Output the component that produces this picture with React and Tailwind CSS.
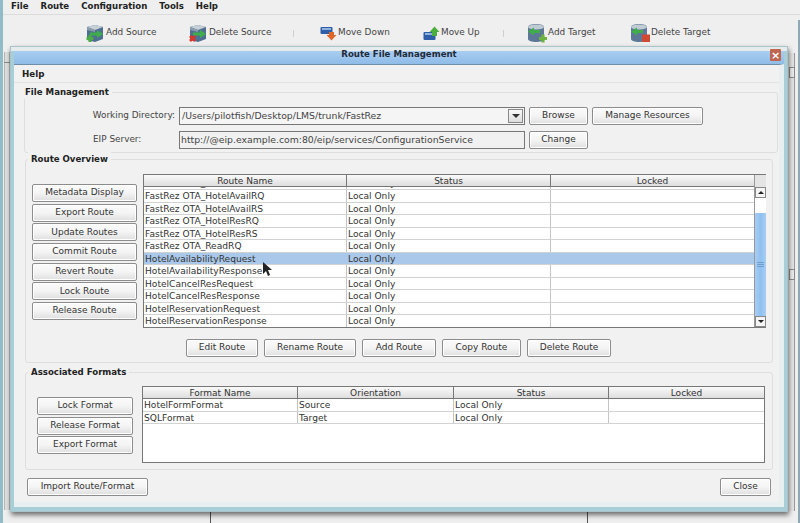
import React from "react";

const F = { fontFamily: '"DejaVu Sans", sans-serif' };

function Btn({ children, w }) {
  return (
    <div className={`${w} flex h-[18px] shrink-0 items-center justify-center rounded-[2px] border border-[#8d8d8d] bg-gradient-to-b from-[#fbfbfb] via-[#f4f4f4] to-[#dfdfdf] text-[9px] text-[#333] shadow-[inset_0_0_0_1px_#fff]`}>
      {children}
    </div>
  );
}

function Group({ title, className, legend = "left-[2px]", children }) {
  return (
    <div className={`relative rounded-[3px] border border-[#dedede] ${className}`}>
      <div className={`absolute ${legend} top-[-8px] bg-[#f1f1f1] px-[3px] text-[8.6px] leading-[14px] font-bold text-[#222]`}>{title}</div>
      {children}
    </div>
  );
}

function Header({ cols }) {
  return (
    <div className="flex h-[12px] shrink-0 border-b border-[#777] bg-gradient-to-b from-[#fafafa] to-[#dedede]">
      {cols.map((c) => (
        <div key={c.n} className={`${c.w} shrink-0 border-r border-[#777] text-center text-[9px] leading-[12px] text-[#333] last:border-r-0`}>{c.n}</div>
      ))}
    </div>
  );
}

function Row({ cols, cells, sel }) {
  return (
    <div className={`flex h-[12.5px] shrink-0 border-b border-[#d2d2d2] ${sel ? "bg-[#a9c8ea]" : "bg-white"}`}>
      {cols.map((c, i) => (
        <div key={c.n} className={`${c.w} shrink-0 overflow-hidden border-r ${sel ? "border-[#a9c8ea]" : "border-[#c4c4c4]"} pl-[1px] text-[9.1px] leading-[12px] text-[#333] last:border-r-0`}>{cells[i]}</div>
      ))}
    </div>
  );
}

function ClippedRow({ cols, cells }) {
  return (
    <div className="flex h-[3px] shrink-0 border-b border-[#d2d2d2] bg-white">
      {cols.map((c, i) => (
        <div key={c.n} className={`${c.w} flex shrink-0 items-end overflow-hidden border-r border-[#c4c4c4] pl-[1px] text-[9.1px] leading-[12px] text-[#333] last:border-r-0`}>
          <span className="shrink-0">{cells[i]}</span>
        </div>
      ))}
    </div>
  );
}

function SourceIcon({ del }) {
  return (
    <svg width="20" height="20" viewBox="0 0 20 20" className="shrink-0">
      <path d="M2 4l8-2 8 2v12l-8 3-8-2z" fill="#4f6f92" />
      <path d="M2 4l8-2 8 2-8 3z" fill="#c6d0d6" />
      <path d="M2 4l8 3v2L2 7z" fill="#8b9cab" />
      <path d="M5 9.500h7V7l6 4-6 4v-2.500H5z" fill="#3fae4a" />
      {del ? (
        <path d="M2 13l5 5M7 13l-5 5" stroke="#d8352a" strokeWidth="2.800" />
      ) : (
        <path d="M1.500 15.500h7M5 12v7" stroke="#4dab45" strokeWidth="3" />
      )}
    </svg>
  );
}

function TargetIcon({ del }) {
  return (
    <svg width="21" height="20" viewBox="0 0 21 20" className="shrink-0">
      <path d="M1 4c0-4 16-4 16 0v12c0 4-16 4-16 0z" fill="#5d7896" />
      <ellipse cx="9" cy="4" rx="8" ry="2.600" fill="#c0ccd4" />
      <path d="M13 7H7V4.500L1 8.500l6 4V10h6z" fill="#3fae4a" />
      {del ? (
        <rect x="12" y="11.500" width="8" height="7.500" fill="#cf4a33" />
      ) : (
        <path d="M12 15.500h8M16 11.500v8" stroke="#6cb33f" strokeWidth="3.200" />
      )}
    </svg>
  );
}

function MoveDown() {
  return (
    <svg width="17" height="15" viewBox="0 0 17 15" className="shrink-0">
      <rect x="0.500" y="1" width="12" height="7" rx="1" fill="#2e5fa8" />
      <rect x="2" y="2" width="9" height="2" fill="#8fb2dd" />
      <path d="M9 6h5v3h2.500l-5 5.500-5-5.500H9z" fill="#e0672a" />
    </svg>
  );
}

function MoveUp() {
  return (
    <svg width="17" height="15" viewBox="0 0 17 15" className="shrink-0">
      <rect x="0.500" y="6" width="12" height="8" rx="1" fill="#2e5fa8" />
      <rect x="2" y="7" width="8" height="2" fill="#8fb2dd" />
      <path d="M9 10V6H6.500l5-5.500 5 5.500H14v4z" fill="#4cae3c" />
    </svg>
  );
}

function Tool({ icon, label, w, gap = "gap-[2px]" }) {
  return (
    <div className={`${w} flex shrink-0 items-center ${gap} text-[8.9px] text-[#444]`}>
      {icon}
      <span>{label}</span>
    </div>
  );
}

const routeCols = [
  { n: "Route Name", w: "w-[203px]" },
  { n: "Status", w: "w-[204px]" },
  { n: "Locked", w: "w-[203px]" },
];
const fmtCols = [
  { n: "Format Name", w: "w-[155px]" },
  { n: "Orientation", w: "w-[156px]" },
  { n: "Status", w: "w-[155px]" },
  { n: "Locked", w: "w-[155px]" },
];
const routes = [
  "FastRez OTA_HotelAvailRQ",
  "FastRez OTA_HotelAvailRS",
  "FastRez OTA_HotelResRQ",
  "FastRez OTA_HotelResRS",
  "FastRez OTA_ReadRQ",
  "HotelAvailabilityRequest",
  "HotelAvailabilityResponse",
  "HotelCancelResRequest",
  "HotelCancelResResponse",
  "HotelReservationRequest",
  "HotelReservationResponse",
];

export default function App() {
  return (
    <div style={F} className="relative h-[523px] w-[800px] overflow-hidden bg-[#efefef]">
      {/* application behind the dialog */}
      <div className="ml-[3px] flex h-[13px] gap-[12px] pl-[8px] text-[8.6px] leading-[13px] font-bold text-[#222]">
        <span>File</span><span>Route</span><span>Configuration</span><span>Tools</span><span>Help</span>
      </div>
      <div className="mt-[1px] h-px bg-[#dcdcdc]" />
      <div className="flex h-[32px] items-center pl-[85px] pt-[4px]">
        <Tool w="w-[103px]" gap="gap-[1px]" icon={<SourceIcon />} label="Add Source" />
        <Tool w="w-[132px]" gap="gap-[1px]" icon={<SourceIcon del />} label="Delete Source" />
        <Tool w="w-[103px]" gap="gap-[1px]" icon={<MoveDown />} label="Move Down" />
        <Tool w="w-[104px]" gap="gap-[1px]" icon={<MoveUp />} label="Move Up" />
        <Tool w="w-[103px]" gap="gap-[0px]" icon={<TargetIcon />} label="Add Target" />
        <Tool w="w-[100px]" gap="gap-[0px]" icon={<TargetIcon del />} label="Delete Target" />
      </div>
      <div className="absolute left-0 top-0 h-full w-[3px] bg-[#8fbcc8]" />
      <div className="absolute left-[293px] top-[30px] h-[7px] w-px bg-[#cfcfcf]" />
      <div className="absolute left-[503px] top-[30px] h-[7px] w-px bg-[#cfcfcf]" />
      <div className="absolute left-[4px] top-[52px] h-[458px] w-[6px] border-x border-[#b5b5b5] bg-[#dfdfdf]" />
      <div className="absolute left-[4px] top-[62px] h-px w-[6px] bg-[#888]" />
      <div className="absolute left-[788px] top-[53px] h-[458px] w-[7px] border-r border-[#9a9a9a] bg-[#e6e6e6]" />
      <div className="absolute left-[789px] top-[67px] h-[11px] w-[6px] border border-[#8a8a8a] bg-[#eee]" />
      <div className="absolute left-[789px] top-[269px] h-[11px] w-[6px] border border-[#8a8a8a] bg-[#eee]" />
      <div className="absolute right-0 top-[20px] h-full w-[2px] bg-[#8ea8b4]" />
      <div className="absolute left-[210px] top-[510px] h-[13px] w-px bg-[#555]" />
      <div className="absolute left-[587px] top-[510px] h-[13px] w-px bg-[#555]" />

      {/* dialog window */}
      <div className="absolute left-[10px] top-[46px] flex h-[466px] w-[778px] flex-col border border-[#a9c3cb] bg-[#a8cfd8] pb-[4px] pl-[3px] pr-[3px] shadow-[1px_3px_5px_rgba(0,0,0,0.55)]">
        <div className="-mx-[3px] h-[4px] shrink-0 bg-[#e6ecee]" />
        <div className="relative flex h-[13px] shrink-0 items-start justify-center bg-gradient-to-b from-[#a9cdf0] to-[#8fbce8] text-[8.6px] leading-[7px] font-bold text-[#1f2a3a]">
          Route File Management
          <div className="absolute right-[3px] top-[-2px] flex h-[12px] w-[11px] items-center justify-center rounded-[1px] bg-[#bf6650] text-[11px] leading-none font-bold text-white">×</div>
        </div>
        <div className="flex min-h-0 flex-1 flex-col border-b-[5px] border-r-[5px] border-t border-b-[#e8eff1] border-r-[#e8eff1] border-t-[#6f8fa8] bg-[#f1f1f1] pl-[10px]">
          <div className="-ml-[10px] h-[18px] shrink-0 border-b border-[#e2e2e2] pl-[8px] text-[8.7px] leading-[18px] font-bold text-[#222]">Help</div>

          <Group title="File Management" legend="-left-[3px]" className="mt-[9px] h-[61px] w-[754px] shrink-0">
            <div className="flex items-center pt-[14px]">
              <div className="w-[154px] shrink-0 pr-[4px] text-right text-[8.9px] text-[#444]">Working Directory:</div>
              <div className="flex h-[18px] w-[346px] shrink-0 items-center justify-between border border-[#777] bg-[#f5f5f5] pl-[2px] pr-[1px] text-[9.3px] text-[#444]">
                <span>/Users/pilotfish/Desktop/LMS/trunk/FastRez</span>
                <div className="flex h-[14px] w-[15px] items-center justify-center border border-[#888] bg-gradient-to-b from-[#fafafa] to-[#ddd]">
                  <div className="h-0 w-0 border-x-[4px] border-t-[4px] border-x-transparent border-t-[#333]" />
                </div>
              </div>
              <div className="ml-[4px] flex gap-[4px]">
                <Btn w="w-[59px]">Browse</Btn>
                <Btn w="w-[111px]">Manage Resources</Btn>
              </div>
            </div>
            <div className="mt-[6px] flex items-center">
              <div className="w-[154px] shrink-0 pl-[68px] text-[8.9px] text-[#444]">EIP Server:</div>
              <div className="flex h-[18px] w-[346px] shrink-0 items-center border border-[#777] bg-[#f1f1f1] pl-[1px] text-[9.3px] text-[#444]">http://@eip.example.com:80/eip/services/ConfigurationService</div>
              <div className="ml-[4px]"><Btn w="w-[59px]">Change</Btn></div>
            </div>
          </Group>

          <Group title="Route Overview" className="ml-[1px] mt-[6px] h-[204px] w-[748px] shrink-0">
            <div className="flex pt-[14px]">
              <div className="ml-[6px] mt-[10px] flex w-[105px] shrink-0 flex-col gap-[1.67px]">
                {["Metadata Display", "Export Route", "Update Routes", "Commit Route", "Revert Route", "Lock Route", "Release Route"].map((b) => (
                  <Btn key={b} w="w-[105px]">{b}</Btn>
                ))}
              </div>
              <div className="ml-[6px] flex h-[154px] w-[623px] shrink-0 border border-[#777] bg-white">
                <div className="flex w-[610px] shrink-0 flex-col overflow-hidden">
                  <Header cols={routeCols} />
                  <ClippedRow cols={routeCols} cells={["FastRez OTA_GetRoomRS", "Local Only", ""]} />
                  {routes.map((r, i) => (
                    <Row key={r} cols={routeCols} cells={[r, "Local Only", ""]} sel={i === 5} />
                  ))}
                </div>
                <div className="flex w-[12px] shrink-0 flex-col border-l border-[#999]">
                  <div className="h-[12px] shrink-0 bg-[#e4e4e4]" />
                  <div className="flex h-[11px] shrink-0 items-center justify-center border border-[#888] bg-[#f4f4f4]">
                    <div className="h-0 w-0 border-x-[3px] border-b-[3px] border-x-transparent border-b-[#222]" />
                  </div>
                  <div className="h-[15px] shrink-0 bg-white" />
                  <div className="flex flex-1 flex-col items-center justify-center gap-[1px] bg-gradient-to-r from-[#a8cdf2] via-[#8fc0f2] to-[#a8cdf2]">
                    <div className="h-px w-[7px] bg-[#6f9fd0]" />
                    <div className="h-px w-[7px] bg-[#6f9fd0]" />
                    <div className="h-px w-[7px] bg-[#6f9fd0]" />
                  </div>
                  <div className="flex h-[11px] shrink-0 items-center justify-center border border-[#888] bg-[#f4f4f4]">
                    <div className="h-0 w-0 border-x-[3px] border-t-[3px] border-x-transparent border-t-[#222]" />
                  </div>
                </div>
              </div>
            </div>
            <div className="ml-[160px] mt-[11px] flex gap-[6px]">
              <Btn w="w-[72px]">Edit Route</Btn>
              <Btn w="w-[92px]">Rename Route</Btn>
              <Btn w="w-[74px]">Add Route</Btn>
              <Btn w="w-[79px]">Copy Route</Btn>
              <Btn w="w-[84px]">Delete Route</Btn>
            </div>
            <svg width="11" height="15" viewBox="0 0 11 15" className="absolute left-[236px] top-[102px]">
              <path d="M1 0v12l3-3 2 5 2-1-2-5h4z" fill="#222" />
            </svg>
          </Group>

          <Group title="Associated Formats" className="ml-[1px] mt-[9px] h-[98px] w-[748px] shrink-0">
            <div className="flex pt-[13px]">
              <div className="ml-[11px] mt-[11px] flex w-[96px] shrink-0 flex-col gap-[1.5px]">
                {["Lock Format", "Release Format", "Export Format"].map((b) => (
                  <Btn key={b} w="w-[96px]">{b}</Btn>
                ))}
              </div>
              <div className="ml-[9px] flex h-[77px] w-[623px] shrink-0 flex-col border border-[#777] bg-white">
                <Header cols={fmtCols} />
                <Row cols={fmtCols} cells={["HotelFormFormat", "Source", "Local Only", ""]} />
                <Row cols={fmtCols} cells={["SQLFormat", "Target", "Local Only", ""]} />
              </div>
            </div>
          </Group>

          <div className="mr-[8px] mt-[8px] flex justify-between pl-[3px]">
            <Btn w="w-[121px]">Import Route/Format</Btn>
            <Btn w="w-[51px]">Close</Btn>
          </div>
        </div>
      </div>
    </div>
  );
}
